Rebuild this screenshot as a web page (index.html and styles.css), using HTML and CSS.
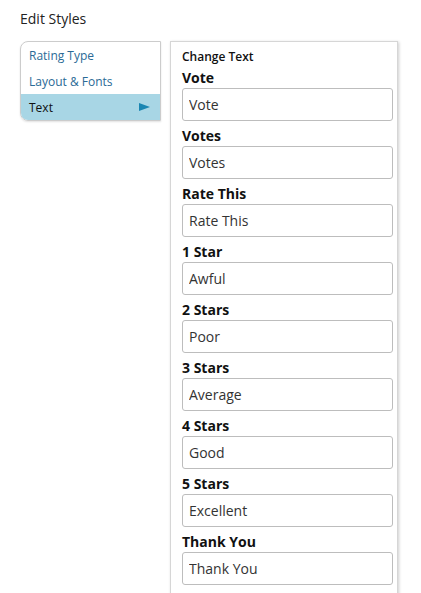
FILE: index.html
```html
<!DOCTYPE html>
<html>
<head>
<meta charset="utf-8">
<link rel="stylesheet" href="styles.css">
</head>
<body>
<div class="page">
  <h1 class="title">Edit Styles</h1>
  <div class="layout">
    <ul class="nav">
      <li class="nav-item"><a class="nav-link">Rating Type</a></li>
      <li class="nav-item"><a class="nav-link">Layout &amp; Fonts</a></li>
      <li class="nav-item active"><a class="nav-link">Text</a><span class="arrow"></span></li>
    </ul>
    <div class="panel">
      <div class="panel-title">Change Text</div>
      <label class="field-label">Vote</label>
      <input class="field-input" type="text" value="Vote">
      <label class="field-label">Votes</label>
      <input class="field-input" type="text" value="Votes">
      <label class="field-label">Rate This</label>
      <input class="field-input" type="text" value="Rate This">
      <label class="field-label">1 Star</label>
      <input class="field-input" type="text" value="Awful">
      <label class="field-label">2 Stars</label>
      <input class="field-input" type="text" value="Poor">
      <label class="field-label">3 Stars</label>
      <input class="field-input" type="text" value="Average">
      <label class="field-label">4 Stars</label>
      <input class="field-input" type="text" value="Good">
      <label class="field-label">5 Stars</label>
      <input class="field-input" type="text" value="Excellent">
      <label class="field-label">Thank You</label>
      <input class="field-input" type="text" value="Thank You">
    </div>
  </div>
</div>
</body>
</html>
```
FILE: styles.css
```css
html, body {
  margin: 0;
  padding: 0;
  background: #fff;
  font-family: "Open Sans", "Liberation Sans", sans-serif;
  color: #222;
}
.page {
  padding: 9px 20px 0 20px;
}
.title {
  margin: 0;
  font-size: 14px;
  font-weight: 400;
  line-height: 20px;
  color: #222;
}
.layout {
  display: flex;
  align-items: flex-start;
  gap: 9px;
  margin-top: 12px;
}
.nav {
  list-style: none;
  margin: 0;
  padding: 0;
  width: 139px;
  border: 1px solid #ccc;
  border-radius: 8px 0 0 8px;
  overflow: hidden;
  box-shadow: 0 1px 2px rgba(0,0,0,0.12);
  flex: none;
}
.nav-item {
  display: flex;
  align-items: center;
  justify-content: space-between;
  height: 26px;
  padding: 0 10px 0 8px;
}
.nav-link {
  font-size: 12px;
  color: #2a6a96;
}
.nav-item.active {
  background: #a8d6e5;
}
.nav-item.active .nav-link {
  color: #111;
}
.arrow {
  width: 0;
  height: 0;
  border-top: 4px solid transparent;
  border-bottom: 4px solid transparent;
  border-left: 11px solid #1a86b2;
}
.panel {
  flex: none;
  width: 215px;
  height: 560px;
  border: 1px solid #d6d6d6;
  border-bottom: none;
  box-shadow: 1px 1px 3px rgba(0,0,0,0.2);
  padding: 5px 0 0 11px;
  display: flex;
  flex-direction: column;
  align-items: flex-start;
}
.panel-title {
  font-size: 12px;
  font-weight: 600;
  line-height: 20px;
  color: #111;
  margin-bottom: 1px;
}
.field-label {
  font-size: 14px;
  font-weight: 700;
  line-height: 20px;
  color: #111;
}
.field-label + .field-input {
  margin-bottom: 5px;
}
.field-input {
  box-sizing: border-box;
  flex: none;
  width: 211px;
  height: 33px;
  margin: 0;
  padding: 0 6px;
  border: 1px solid #bdbdbd;
  border-radius: 3px;
  font-family: "Open Sans", "Liberation Sans", sans-serif;
  font-size: 14px;
  color: #333;
  background: #fff;
  outline: none;
}
```
